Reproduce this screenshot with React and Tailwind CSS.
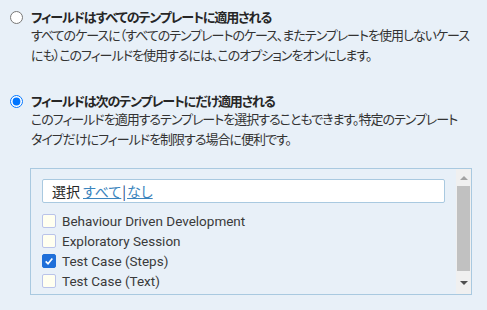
import { useState } from 'react';

const templates = [
  { name: 'Behaviour Driven Development', checked: false },
  { name: 'Exploratory Session', checked: false },
  { name: 'Test Case (Steps)', checked: true },
  { name: 'Test Case (Text)', checked: false },
];

const jp = "font-['Meiryo','Noto_Sans_CJK_JP',sans-serif] [font-feature-settings:'palt']";

const CheckBox = ({ checked }) =>
  checked ? (
    <span className="flex h-[14px] w-[14px] shrink-0 items-center justify-center rounded-[2px] border border-[#1f6fd9] bg-[#1f6fd9]">
      <svg viewBox="0 0 12 12" className="h-[10px] w-[10px]">
        <path d="M2 6.5 L4.8 9.2 L10 3" fill="none" stroke="#fff" strokeWidth="2" />
      </svg>
    </span>
  ) : (
    <span className="h-[14px] w-[14px] shrink-0 rounded-[2px] border border-[#b9c3ea] bg-[#fffff0]" />
  );

const App = () => {
  const [scope, setScope] = useState('some');

  return (
    <div className={`h-[310px] w-[487px] overflow-hidden bg-[#e8f0f8] pl-[10px] pt-[9px] text-[#262626] ${jp}`}>
      {/* all templates */}
      <label className="flex items-start gap-[8px]">
        <input
          type="radio"
          name="scope"
          checked={scope === 'all'}
          onChange={() => setScope('all')}
          className="m-0 mt-[2px] h-[13px] w-[13px] shrink-0"
        />
        <div>
          <div className="whitespace-nowrap text-[13px] font-bold leading-[16px] tracking-[-1.1px]">
            フィールドはすべてのテンプレートに適用される
          </div>
          <div className="whitespace-nowrap text-[13px] leading-[20px] tracking-[-1px] text-[#333]">
            すべてのケースに（すべてのテンプレートのケース、またテンプレートを使用しないケース
            <br />
            にも）このフィールドを使用するには、このオプションをオンにします。
          </div>
        </div>
      </label>

      {/* some templates */}
      <label className="mt-[28px] flex items-start gap-[8px]">
        <input
          type="radio"
          name="scope"
          checked={scope === 'some'}
          onChange={() => setScope('some')}
          className="m-0 mt-[2px] h-[13px] w-[13px] shrink-0"
        />
        <div>
          <div className="whitespace-nowrap text-[13px] font-bold leading-[16px] tracking-[-1.1px]">
            フィールドは次のテンプレートにだけ適用される
          </div>
          <div className="whitespace-nowrap text-[13px] leading-[20px] tracking-[-1px] text-[#333]">
            このフィールドを適用するテンプレートを選択することもできます。特定のテンプレート
            <br />
            タイプだけにフィールドを制限する場合に便利です。
          </div>
        </div>
      </label>

      {/* template list */}
      <div className="ml-[20px] mt-[19px] flex h-[127px] w-[442px] border border-[#a9c9e0]">
        <div className="flex-1 pl-[11px] pr-[11px] pt-[10px]">
          <div className="flex h-[24px] items-center rounded-[2px] border border-[#a9c9e0] bg-white pl-[9px] text-[14px]">
            <span>選択</span>
            <a href="#" className="ml-[3px] text-[#3b84bd] underline">すべて</a>
            <span className="px-[1px] text-[#1c3d7a]">|</span>
            <a href="#" className="text-[#3b84bd] underline">なし</a>
          </div>
          <div className="mt-[11px] flex flex-col gap-[6px] font-['Roboto',sans-serif] text-[13.5px] leading-[14px] text-[#3a3a3a]">
            {templates.map((t) => (
              <div key={t.name} className="flex items-center gap-[6px]">
                <CheckBox checked={t.checked} />
                <span className="whitespace-nowrap">{t.name}</span>
              </div>
            ))}
          </div>
        </div>
        {/* scrollbar */}
        <div className="flex w-[15px] flex-col items-center bg-[#f0f0f0]">
          <div className="flex h-[17px] items-center justify-center">
            <span className="h-0 w-0 border-x-[4px] border-b-[4px] border-x-transparent border-b-[#a3a3a3]" />
          </div>
          <div className="h-[85px] w-[13px] bg-[#c1c1c1]" />
          <div className="flex flex-1 items-center justify-center">
            <span className="h-0 w-0 border-x-[4px] border-t-[4px] border-x-transparent border-t-[#505050]" />
          </div>
        </div>
      </div>
    </div>
  );
};

export default App;
